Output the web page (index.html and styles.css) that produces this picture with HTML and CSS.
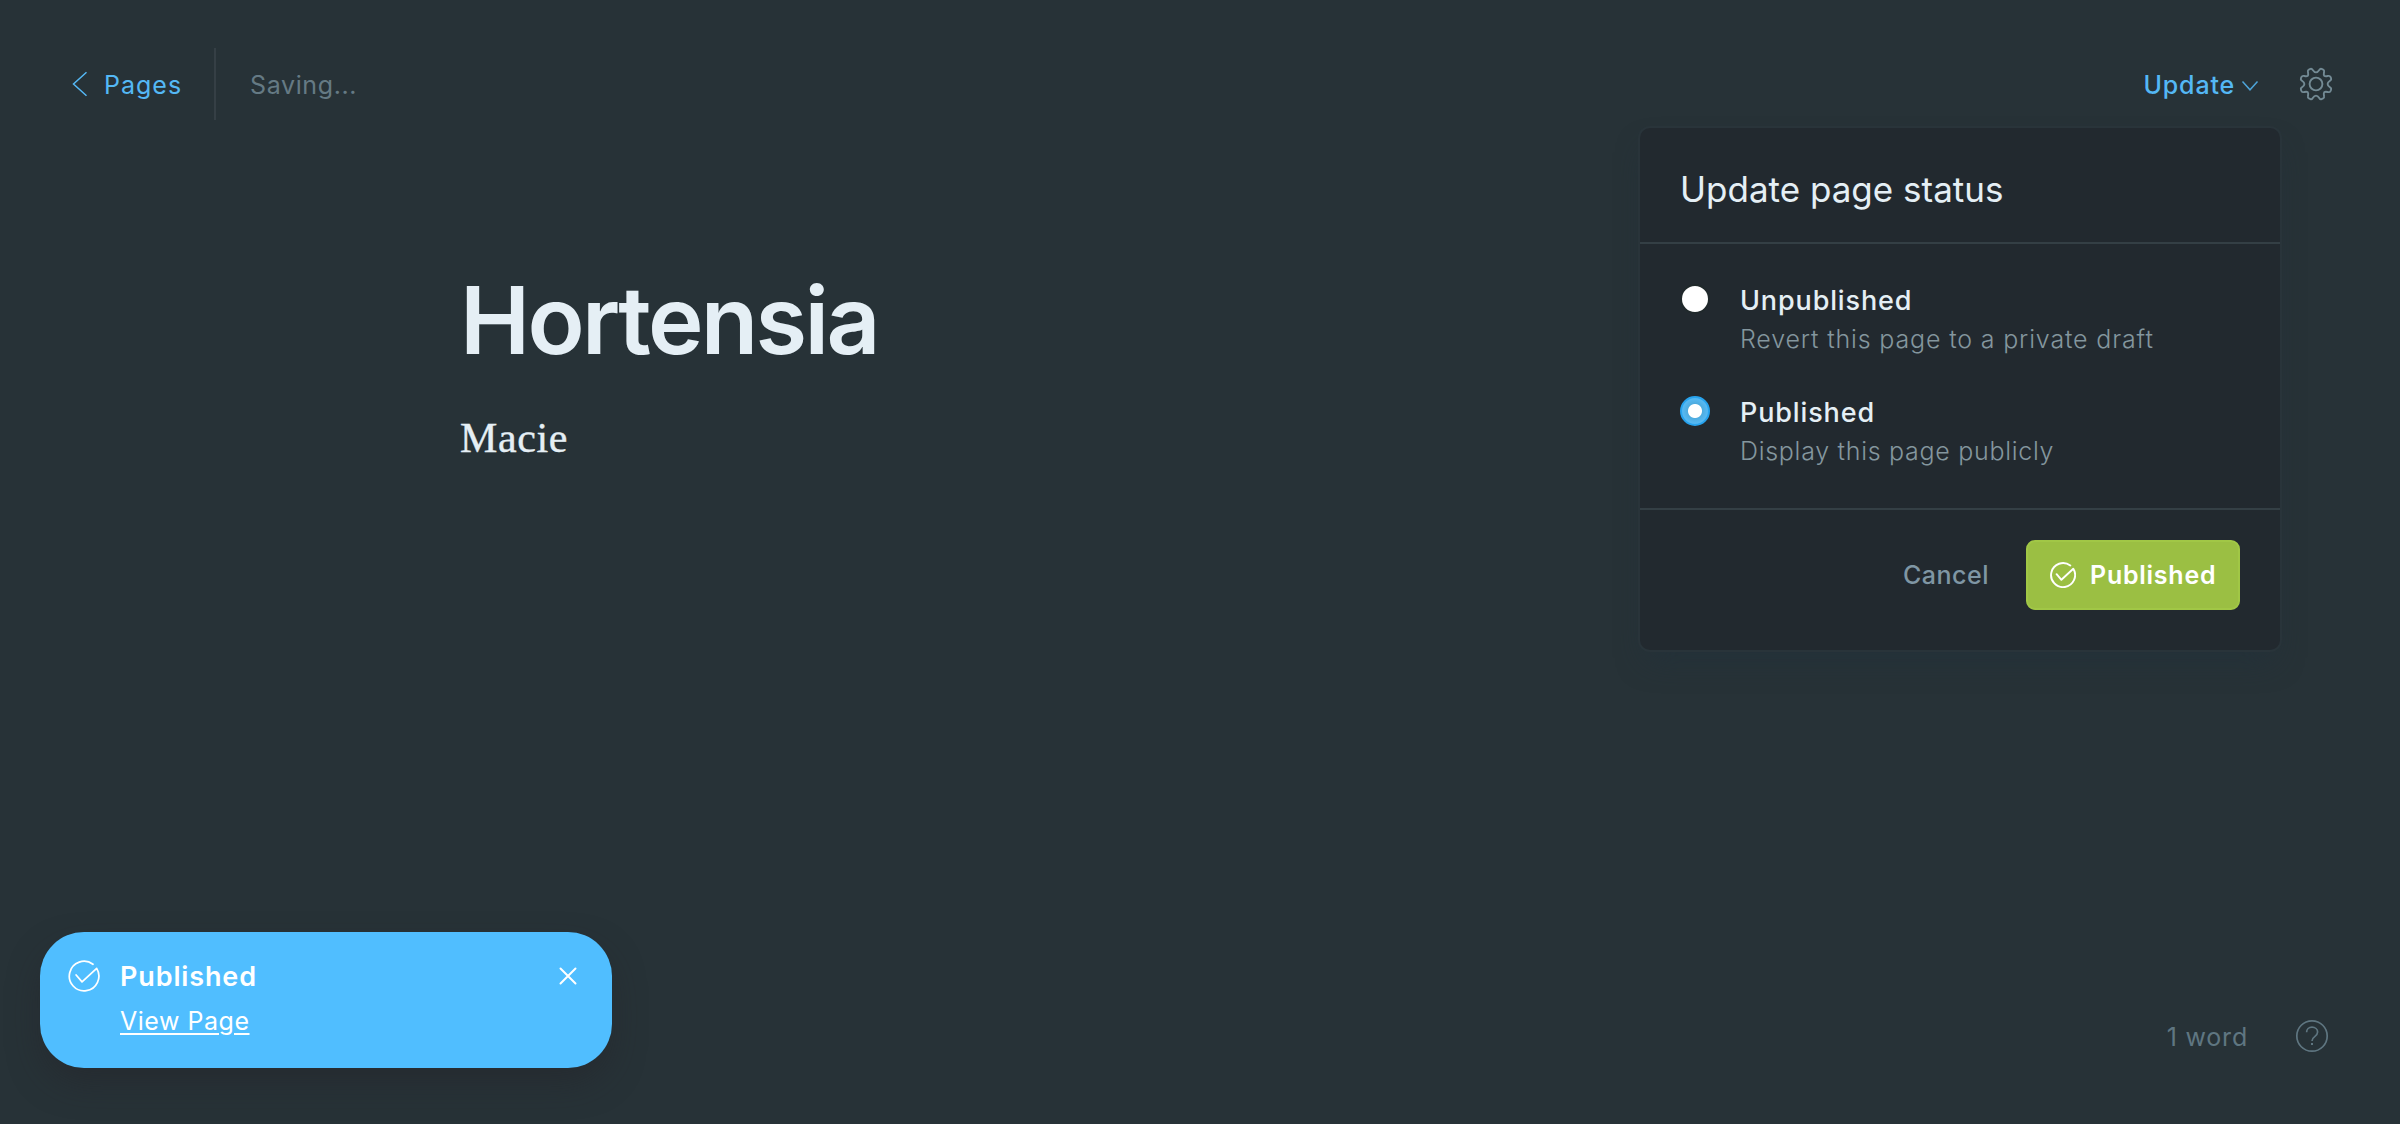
FILE: index.html
```
<!DOCTYPE html>
<html lang="en">
<head>
<meta charset="utf-8">
<title>Hortensia</title>
<link rel="stylesheet" href="styles.css">
</head>
<body>
<div class="editor">
  <header class="topbar">
    <a class="back">
      <svg class="back-icon" width="16" height="26" viewBox="0 0 16 26"><path d="M14.5 1.2 1.5 13l13 11.8"/></svg>
      <span>Pages</span>
    </a>
    <span class="saving">Saving...</span>
    <div class="actions">
      <div class="update">
        <span>Update</span>
        <svg class="caret" width="18" height="12" viewBox="0 0 18 12"><path d="m1.5 1.5 7.5 8.3 7.5-8.3"/></svg>
      </div>
      <svg class="gear" width="34" height="34" viewBox="-17 -17 34 34">
        <defs><path id="tooth" d="M0-11.6C1.8-11.6 2.6-13 3.4-14.2 4-15.2 4.8-15.4 5.6-15.1L7.1-14.5C8.1-14 8.3-13.2 8.1-12.2 7.8-10.5 7.4-9.3 8.2-8.2 9.3-7.4 10.5-7.8 12.2-8.1 13.2-8.3 14-8.1 14.5-7.1L15.1-5.6C15.4-4.8 15.2-4 14.2-3.4 13-2.6 11.6-1.8 11.6 0"/></defs>
        <use href="#tooth"/><use href="#tooth" transform="rotate(90)"/><use href="#tooth" transform="rotate(180)"/><use href="#tooth" transform="rotate(270)"/>
        <circle r="6.4"/>
      </svg>
    </div>
  </header>

  <main class="content">
    <h1 class="title">Hortensia</h1>
    <p class="body">Macie</p>
  </main>

  <footer class="status">
    <span class="count">1 word</span>
    <svg class="help" width="34" height="34" viewBox="0 0 34 34"><circle cx="17" cy="17" r="15.2"/><path d="M11.6 13.2c0-3 2.3-5 5.4-5s5.6 2 5.6 4.9c0 2.400-1.300 3.400-2.900 4.500-1.700 1.200-2.700 2-2.700 4.400"/><path class="dot" d="M16 24.100h2v2h-2z"/></svg>
  </footer>
</div>

<section class="panel">
  <h2 class="panel-title">Update page status</h2>
  <div class="options">
    <div class="option">
      <span class="radio"></span>
      <div><div class="option-title">Unpublished</div><div class="option-desc">Revert this page to a private draft</div></div>
    </div>
    <div class="option">
      <span class="radio radio-on"></span>
      <div><div class="option-title">Published</div><div class="option-desc narrow">Display this page publicly</div></div>
    </div>
  </div>
  <div class="panel-foot">
    <span class="cancel">Cancel</span>
    <span class="publish">
      <svg class="check" width="26" height="26" viewBox="0 0 26 26"><path d="M6.600 12.200 11.400 17.800 23.300 6.800A12 12 0 1 1 20.300 3.500"/></svg>
      <span>Published</span>
    </span>
  </div>
</section>

<aside class="toast">
  <svg class="check check-thin" width="32" height="32" viewBox="0 0 26 26"><path d="M6.600 12.200 11.400 17.800 23.300 6.800A12 12 0 1 1 20.300 3.500"/></svg>
  <div class="toast-text"><div class="toast-title">Published</div><a class="toast-link">View Page</a></div>
  <svg class="close" width="18" height="18" viewBox="0 0 18 18"><path d="m1.500 1.500 15 15m0-15-15 15"/></svg>
</aside>
</body>
</html>
```
FILE: styles.css
```
* { box-sizing: border-box; }

body {
  margin: 0;
  background: #273237;
  color: #e5eff5;
  font: 400 25px/38px Inter, "Liberation Sans", sans-serif;
}

svg { display: block; flex: none; fill: none; stroke: currentColor; }

.editor { display: flex; flex-direction: column; height: 1124px; }

/* Top bar */
.topbar { display: flex; align-items: center; height: 120px; padding: 48px 67px 0 72px; }
.back {
  display: flex;
  align-items: center;
  gap: 16px;
  width: 144px;
  height: 72px;
  border-right: 2px solid #353f45;
  color: #54b8f5;
  letter-spacing: 1px;
}
.back span, .saving, .update span { padding-top: 2px; }
.back-icon { stroke-width: 1.5; }
.saving { margin-left: 34px; color: #657a84; letter-spacing: .63px; }
.actions { display: flex; align-items: center; gap: 40px; margin-left: auto; }
.update { display: flex; align-items: center; gap: 6px; color: #54b8f5; font-weight: 500; letter-spacing: .82px; }
.caret { margin-top: 4px; stroke-width: 1.5; opacity: .85; }
.gear { color: #738a94; stroke-width: 1.9; }

/* Editing area */
.content { flex: 1; width: 1480px; margin: 0 auto; padding-top: 145px; }
.title { margin: 0 0 33px; font-size: 94px; line-height: 110px; font-weight: 600; letter-spacing: -2.68px; }
.body { margin: 0; font: 42px/60px "Liberation Serif", serif; letter-spacing: .6px; -webkit-text-stroke: .4px; }

/* Word count */
.status { display: flex; justify-content: flex-end; align-items: center; gap: 47px; height: 34px; margin-bottom: 71px; padding-right: 71px; color: #5f7681; }
.count { padding-top: 2px; letter-spacing: .8px; }
.help { stroke-width: 1.7; }
.help .dot { fill: currentColor; stroke: none; }

/* Status menu */
.panel {
  position: absolute;
  top: 128px;
  left: 1640px;
  width: 640px;
  height: 522px;
  border-radius: 10px;
  background: #22292f;
  box-shadow: 0 0 0 2px #29343a, 0 16px 30px -8px rgba(33, 48, 58, .7);
}
.panel-title {
  height: 116px;
  margin: 0;
  padding: 39px 40px 0;
  border-bottom: 2px solid #343f45;
  font-size: 35px;
  line-height: 44px;
  font-weight: 400;
  letter-spacing: 0;
}
.options { display: flex; flex-direction: column; gap: 34px; height: 266px; padding: 36px 40px 38px; border-bottom: 2px solid #343f45; }
.option { display: flex; gap: 30px; }
.radio {
  width: 30px;
  height: 30px;
  margin-top: 4px;
  border: 2px solid #20292b;
  border-radius: 50%;
  background: #fff;
}
.radio-on { border-color: #27a3ee; background: radial-gradient(circle, #fff 6.500px, #4facdf 7.500px, #55b8f2 12px); }
.option-title { position: relative; top: 1px; font-size: 27px; line-height: 40px; font-weight: 500; letter-spacing: .87px; }
.option-desc { color: #84969e; font-weight: 300; letter-spacing: .84px; }
.narrow { letter-spacing: .71px; }
.panel-foot { display: flex; justify-content: flex-end; align-items: center; gap: 37px; padding: 30px 40px 0 0; }
.cancel { color: #7f96a4; font-weight: 500; letter-spacing: .5px; }
.publish {
  display: flex;
  align-items: center;
  gap: 14px;
  width: 214px;
  height: 70px;
  padding-left: 22px;
  border: 2px solid #a1c746;
  border-radius: 9px;
  background: #9bbf43;
  color: #fff;
  font-weight: 600;
  letter-spacing: .75px;
}
.check { stroke-width: 1.9; stroke-linecap: round; stroke-linejoin: round; }
.check-thin { stroke-width: 1.4; }

/* Notification */
.toast {
  position: absolute;
  top: 932px;
  left: 40px;
  display: flex;
  align-items: flex-start;
  width: 572px;
  height: 136px;
  padding: 24px 35px 0 28px;
  border-radius: 44px;
  background: #50beff;
  color: #fff;
  box-shadow: 0 16px 34px -4px rgba(36, 36, 42, .55);
}
.toast .check { margin-top: 4px; }
.toast-text { flex: 1; margin-left: 20px; }
.toast-title { padding-top: 1px; font-size: 27px; line-height: 40px; font-weight: 600; letter-spacing: .86px; }
.toast-link { display: block; width: max-content; margin-top: 5px; letter-spacing: .52px; text-decoration: underline 2px; text-underline-offset: 3px; }
.close { margin-top: 11px; stroke-width: 2; stroke-linecap: round; }
```
